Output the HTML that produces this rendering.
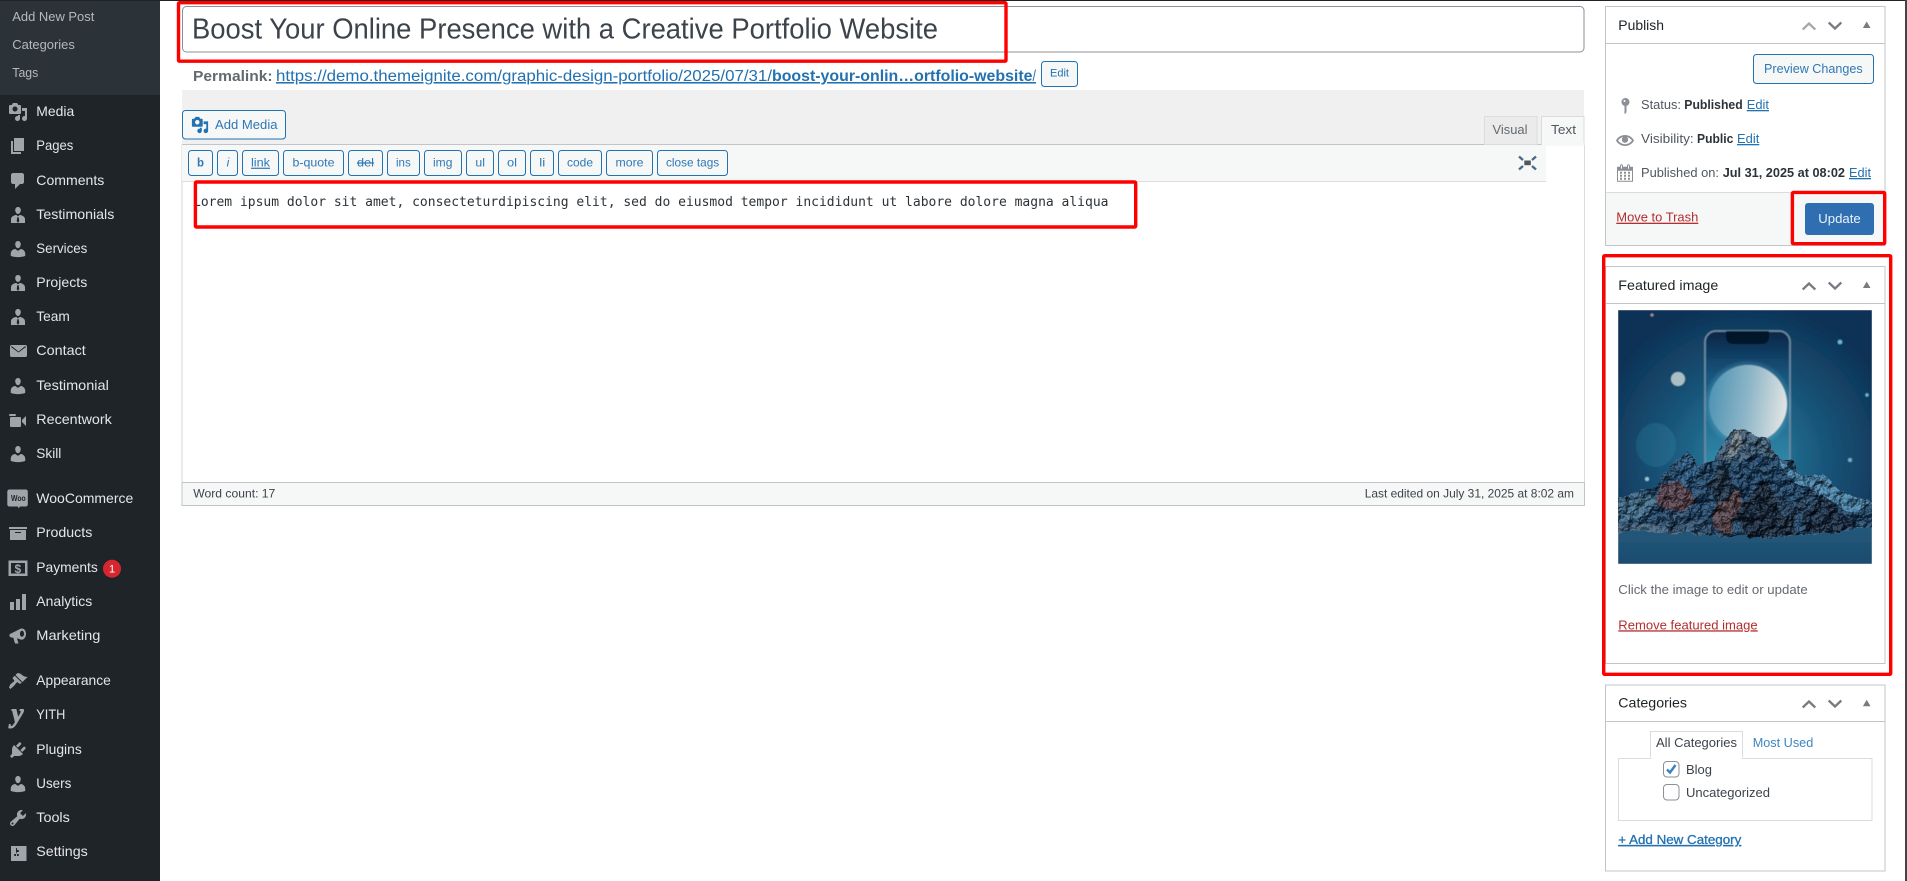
<!DOCTYPE html>
<html lang="en">
<head>
<meta charset="utf-8">
<title>Edit Post</title>
<style>
html,body{margin:0;padding:0;background:#fff;width:1907px;height:881px;overflow:hidden}
svg{display:block}
text{font-family:"Liberation Sans",sans-serif;font-size:13px;white-space:pre}
.m{font-size:14px;fill:#e4e6e7}
.s{font-size:13px;fill:#b4b9bd}
.ic{fill:#a0a5aa}
.l{fill:#2271b1;text-decoration:underline}
.r{fill:#b32d2e;text-decoration:underline}
.d{fill:#50575e}
.b{font-weight:bold;fill:#2c3338}
.h{font-size:14px;fill:#1d2327}
.q{font-size:12px;fill:#2f78b5}
.qb{fill:#f6f7f7;stroke:#2271b1;stroke-width:1}
.chev{fill:none;stroke:#787c82;stroke-width:2.3}
.red{fill:none;stroke:#f00;stroke-width:3.4}
.pan{fill:#fff;stroke:#c3c4c7;stroke-width:1}
</style>
</head>
<body>
<svg width="1907" height="881" viewBox="0 0 1907 881" xmlns="http://www.w3.org/2000/svg">
<defs>
<path id="media" d="M13 11V4c0-.55-.45-1-1-1h-1.67L9 1H5L3.67 3H2c-.55 0-1 .45-1 1v7c0 .55.45 1 1 1h10c.55 0 1-.45 1-1zM7 4.5c1.38 0 2.5 1.12 2.5 2.5S8.38 9.5 7 9.5 4.5 8.38 4.5 7 5.62 4.5 7 4.5zM14 6h5v10.5c0 1.38-1.12 2.5-2.5 2.5S14 17.88 14 16.5s1.12-2.5 2.5-2.5c.17 0 .34.02.5.05V9h-3V6zm-4 8.05V13h2v3.5c0 1.38-1.12 2.5-2.5 2.5S7 17.88 7 16.5 8.12 14 9.5 14c.17 0 .34.02.5.05z"/>
<path id="user" d="M10 9.25c-2.27 0-2.73-3.44-2.73-3.44C7 4.02 7.82 2 9.97 2c2.16 0 2.98 2.02 2.71 3.81 0 0-.41 3.44-2.68 3.44zm0 2.57L12.72 10c2.39 0 4.52 2.33 4.52 4.53v2.49s-3.65 1.13-7.24 1.13c-3.65 0-7.24-1.13-7.24-1.13v-2.49c0-2.25 1.94-4.48 4.47-4.48z"/>
<g id="biz">
<path d="M10 8.900c-2.100 0-2.800-2.900-2.800-3.700C7.200 3.300 8.300 2 10 2s2.800 1.300 2.800 3.200c0 .8-.7 3.700-2.800 3.700z"/>
<path d="M3 18v-3.700c0-2.500 2.500-3.900 5.300-4.400L10 11.400l1.700-1.500c2.800.5 5.300 1.900 5.300 4.400V18z"/>
<path d="M9.300 12.300h1.400l.6 3.700L10 18l-1.300-2z" fill="#1f2429"/>
</g>
<linearGradient id="moon" x1="0" y1="0.4" x2="1" y2="0.55"><stop offset="0" stop-color="#4f94b4"/><stop offset=".5" stop-color="#8fb6c8"/><stop offset="1" stop-color="#e2e6e4"/></linearGradient>
<radialGradient id="sky" cx=".5" cy=".58" r=".72"><stop offset="0" stop-color="#2c86a6"/><stop offset=".45" stop-color="#185478"/><stop offset=".85" stop-color="#0e3256"/></radialGradient>
<linearGradient id="water" x1="0" y1="0" x2="0" y2="1"><stop offset="0" stop-color="#245a7c"/><stop offset="1" stop-color="#1b4c6e"/></linearGradient>
<linearGradient id="screen" x1="0" y1="0" x2="0" y2="1"><stop offset="0" stop-color="#0a2546"/><stop offset=".28" stop-color="#17577f"/><stop offset="1" stop-color="#3a9ab8"/></linearGradient>
<radialGradient id="glow"><stop offset=".62" stop-color="#8fdcee" stop-opacity=".6"/><stop offset="1" stop-color="#8fdcee" stop-opacity="0"/></radialGradient>
<filter id="soft" x="0" y="0" width="1" height="1"><feGaussianBlur stdDeviation=".5"/></filter>
<filter id="rock" x="-5%" y="-5%" width="110%" height="110%" color-interpolation-filters="sRGB">
<feTurbulence type="fractalNoise" baseFrequency=".07" numOctaves="4" seed="7" result="n"/>
<feDisplacementMap in="SourceGraphic" in2="n" scale="10" xChannelSelector="R" yChannelSelector="G" result="d"/>
<feTurbulence type="fractalNoise" baseFrequency=".11" numOctaves="5" seed="3" result="t"/>
<feDiffuseLighting in="t" surfaceScale="3.500" diffuseConstant="1.100" lighting-color="#fff" result="lit"><feDistantLight azimuth="235" elevation="55"/></feDiffuseLighting>
<feComposite in="lit" in2="d" operator="in" result="litc"/>
<feBlend in="d" in2="litc" mode="multiply" result="shaded"/>
<feSpecularLighting in="t" surfaceScale="3" specularConstant=".3" specularExponent="14" lighting-color="#bcd4e6" result="sp"><feDistantLight azimuth="235" elevation="50"/></feSpecularLighting>
<feComposite in="sp" in2="d" operator="in" result="spc"/>
<feMerge result="mx"><feMergeNode in="shaded"/><feMergeNode in="spc"/></feMerge>
<feGaussianBlur in="mx" stdDeviation=".35"/>
</filter>
<clipPath id="imgclip"><rect width="254" height="254"/></clipPath>
</defs>

<!-- page edges -->
<rect x="0" y="0" width="1907" height="1" fill="#1d2327"/>
<rect x="1905" y="0" width="2" height="881" fill="#444"/>

<!-- admin sidebar -->
<g>
<rect x="0" y="0" width="160" height="881" fill="#1f2429"/>
<rect x="0" y="1" width="160" height="94" fill="#2c3338"/>
<text class="s" x="12.300" y="21" textLength="82" lengthAdjust="spacingAndGlyphs">Add New Post</text>
<text class="s" x="12.300" y="49" textLength="62.500" lengthAdjust="spacingAndGlyphs">Categories</text>
<text class="s" x="12.300" y="77" textLength="26" lengthAdjust="spacingAndGlyphs">Tags</text>

<text class="m" x="36.300" y="116" textLength="38" lengthAdjust="spacingAndGlyphs">Media</text>
<text class="m" x="36.300" y="150" textLength="37" lengthAdjust="spacingAndGlyphs">Pages</text>
<text class="m" x="36.300" y="185" textLength="68" lengthAdjust="spacingAndGlyphs">Comments</text>
<text class="m" x="36.300" y="219" textLength="78" lengthAdjust="spacingAndGlyphs">Testimonials</text>
<text class="m" x="36.300" y="253" textLength="51" lengthAdjust="spacingAndGlyphs">Services</text>
<text class="m" x="36.300" y="287" textLength="51" lengthAdjust="spacingAndGlyphs">Projects</text>
<text class="m" x="36.300" y="321" textLength="33.500" lengthAdjust="spacingAndGlyphs">Team</text>
<text class="m" x="36.300" y="355" textLength="49.500" lengthAdjust="spacingAndGlyphs">Contact</text>
<text class="m" x="36.300" y="390" textLength="72.500" lengthAdjust="spacingAndGlyphs">Testimonial</text>
<text class="m" x="36.300" y="424" textLength="75.500" lengthAdjust="spacingAndGlyphs">Recentwork</text>
<text class="m" x="36.300" y="458" textLength="25" lengthAdjust="spacingAndGlyphs">Skill</text>
<text class="m" x="36.300" y="503" textLength="97" lengthAdjust="spacingAndGlyphs">WooCommerce</text>
<text class="m" x="36.300" y="537" textLength="56" lengthAdjust="spacingAndGlyphs">Products</text>
<text class="m" x="36.300" y="572" textLength="61.500" lengthAdjust="spacingAndGlyphs">Payments</text>
<text class="m" x="36.300" y="606" textLength="56" lengthAdjust="spacingAndGlyphs">Analytics</text>
<text class="m" x="36.300" y="640" textLength="64" lengthAdjust="spacingAndGlyphs">Marketing</text>
<text class="m" x="36.300" y="685" textLength="74.500" lengthAdjust="spacingAndGlyphs">Appearance</text>
<text class="m" x="36.300" y="719" textLength="29" lengthAdjust="spacingAndGlyphs">YITH</text>
<text class="m" x="36.300" y="754" textLength="45.500" lengthAdjust="spacingAndGlyphs">Plugins</text>
<text class="m" x="36.300" y="788" textLength="35" lengthAdjust="spacingAndGlyphs">Users</text>
<text class="m" x="36.300" y="822" textLength="33.500" lengthAdjust="spacingAndGlyphs">Tools</text>
<text class="m" x="36.300" y="856" textLength="51.500" lengthAdjust="spacingAndGlyphs">Settings</text>

<g class="ic">
<use href="#media" transform="translate(8,102)"/>
<path transform="translate(8,136)" d="M6 15V2h10v13H6zm-1 1h8v2H3V5h2v11z"/>
<path transform="translate(8,171)" d="M5 2h9c1.100 0 2 .9 2 2v7c0 1.100-.9 2-2 2h-2l-5 5v-5H5c-1.100 0-2-.9-2-2V4c0-1.100.9-2 2-2z"/>
<use href="#biz" transform="translate(8,205)"/>
<use href="#user" transform="translate(8,239)"/>
<use href="#biz" transform="translate(8,273)"/>
<use href="#biz" transform="translate(8,307)"/>
<path transform="translate(8,341)" d="M19 14.500v-9c0-.83-.67-1.500-1.500-1.500H3.490c-.83 0-1.500.67-1.500 1.500v9c0 .83.67 1.500 1.500 1.500H17.500c.83 0 1.500-.67 1.500-1.500zm-1.310-9.110c.33.33.15.67-.03.84L10.500 11.500 3.300 6.230c-.18-.17-.36-.51-.03-.84s.67-.17.95.07l6.280 5.040 6.250-5.040c.28-.24.62-.4.95-.07z"/>
<use href="#user" transform="translate(8,376)"/>
<path transform="translate(8,410)" d="M8 5c0-.55-.45-1-1-1H2c-.55 0-1 .45-1 1 0 .55.45 1 1 1h5c.55 0 1-.45 1-1zm6 5l4-4v10l-4-4v-2zm-1 4V8c0-.55-.45-1-1-1H3c-.55 0-1 .45-1 1v8c0 .55.45 1 1 1h9c.55 0 1-.45 1-1z"/>
<use href="#user" transform="translate(8,444)"/>
<path d="M10.300 489.500h15.500c1.100 0 2 .9 2 2v13c0 1.100-.9 2-2 2h-6l-1 2-1-2h-8.500c-1.100 0-2-.9-2-2v-13c0-1.100.9-2 2-2z"/>
<path transform="translate(8,523)" d="M19 4v2H1V4h18zM2 7h16v10H2V7zm11 3V9H7v1h6z"/>
<path fill-rule="evenodd" d="M8.500 560.500h19v15.500h-19zM11 563v10.500h14V563z"/>
<path transform="translate(8,592)" d="M18 18V2h-4v16h4zm-6 0V7H8v11h4zm-6 0v-8H2v8h4z"/>
<path fill-rule="evenodd" transform="translate(8,626)" d="M2 8l10-5c3-1.500 6 1 6 4.700S15.500 14.500 12.500 13.500L9 12.300l1.500 5.200H7L5.300 11.700 3.500 11.500C1.500 11.300 .8 8.800 2 8zM14 4.800c-1.200 0-2 1.300-2 3s.8 3 2 3 2-1.300 2-3-.8-3-2-3z"/>
<path transform="translate(8,671)" d="M14.480 11.060L7.410 3.990l1.500-1.500c.5-.56 2.300-.47 3.510.32 1.210.8 1.430 1.280 2.910 2.100 1.180.64 2.450 1.260 4.450.85zm-.71.71L6.700 4.700 4.930 6.470c-.39.39-.39 1.020 0 1.410l1.060 1.060c.39.39.39 1.030 0 1.420-.6.6-3 2.400-3.700 3.100L1 16.500l1.500 1.500 3.700-3.400c.7-.7 1.900-2.500 2.500-3.100.39-.39 1.030-.39 1.420 0l1.060 1.060c.39.39 1.020.39 1.410 0z"/>
<text x="11.500" y="722" style="font-family:'Liberation Serif',serif;font-size:27px;font-weight:bold;font-style:italic;fill:#a0a5aa;stroke:#a0a5aa;stroke-width:1">y</text>
<path transform="translate(8,740)" d="M13.110 4.360L9.870 7.600 8 5.730l3.240-3.240c.35-.34 1.050-.2 1.560.32.52.51.66 1.210.31 1.550zm-8 1.770l.91-1.120 9.010 9.010-1.190.84c-.71.71-2.630 1.160-3.820 1.160H6.140L4.900 17.260c-.59.59-1.540.59-2.120 0-.59-.58-.59-1.530 0-2.120l1.240-1.240v-3.880c0-1.130.4-3.190 1.090-3.890zm7.260 3.970l3.240-3.240c.34-.35 1.040-.21 1.550.31.52.51.66 1.210.31 1.550l-3.240 3.250z"/>
<use href="#user" transform="translate(8,774)"/>
<path transform="translate(8,808)" d="M16.680 9.770c-1.340 1.340-3.300 1.670-4.950.99l-5.410 6.520c-.99.99-2.590.99-3.580 0s-.99-2.590 0-3.570l6.520-5.420c-.68-1.650-.35-3.610.99-4.950 1.280-1.280 3.120-1.620 4.720-1.060l-2.890 2.890 2.820 2.820 2.860-2.870c.53 1.580.18 3.390-1.080 4.650zM3.810 16.210c.4.39 1.040.39 1.430 0 .4-.4.4-1.040 0-1.430-.39-.4-1.030-.4-1.430 0-.39.39-.39 1.030 0 1.430z"/>
<path transform="translate(9,843)" d="M2 3h15.500v15H2zM8 11h1c.55 0 1 .45 1 1s-.45 1-1 1H8v1.500c0 .28-.22.5-.5.5s-.5-.22-.5-.5V13H6c-.55 0-1-.45-1-1s.45-1 1-1h1V5.500c0-.28.22-.5.5-.5s.5.22.5.5V7h1c.55 0 1 .45 1 1s-.45 1-1 1h-1v5.500c0 .28-.22.5-.5.5s-.5-.22-.5-.5V9z" fill-rule="evenodd"/>
</g>
<text x="11" y="501" textLength="14.700" lengthAdjust="spacingAndGlyphs" style="font-size:8.500px;font-weight:bold;fill:#1f2429">Woo</text>
<text x="14.500" y="573" style="font-size:12px;font-weight:bold;fill:#a0a5aa">$</text>
<circle cx="112" cy="568.700" r="9" fill="#d8262f"/>
<text x="112" y="572.700" text-anchor="middle" style="font-size:11px;fill:#fff">1</text>
</g>

<!-- title -->
<rect x="182.500" y="6.500" width="1401.500" height="45.500" rx="4" fill="#fff" stroke="#8c8f94"/>
<text x="192" y="38.300" textLength="746" lengthAdjust="spacingAndGlyphs" style="font-size:28.500px;fill:#3c434a">Boost Your Online Presence with a Creative Portfolio Website</text>

<!-- permalink -->
<text x="193" y="81" textLength="79.600" lengthAdjust="spacingAndGlyphs" style="font-size:15px;font-weight:bold;fill:#646970">Permalink:</text>
<text class="l" x="276" y="81" textLength="496" lengthAdjust="spacingAndGlyphs" style="font-size:15.500px">https://demo.themeignite.com/graphic-design-portfolio/2025/07/31/</text>
<text class="l" x="772" y="81" textLength="260.500" lengthAdjust="spacingAndGlyphs" style="font-size:15.500px;font-weight:bold">boost-your-onlin…ortfolio-website</text>
<text class="l" x="1032.500" y="81" textLength="3.500" lengthAdjust="spacingAndGlyphs" style="font-size:15.500px">/</text>
<rect class="qb" x="1041.500" y="61.500" width="36" height="25" rx="3"/>
<text x="1050" y="76.700" textLength="19" lengthAdjust="spacingAndGlyphs" style="font-size:11px;fill:#2271b1">Edit</text>

<!-- editor toolbar -->
<rect x="182" y="90" width="1402" height="54" fill="#f0f0f1"/>
<rect x="182" y="144" width="1402" height="1" fill="#c3c4c7"/>
<rect class="qb" x="182.500" y="110.500" width="103" height="28.500" rx="3"/>
<use href="#media" transform="translate(191,116) scale(.9)" fill="#2271b1"/>
<text x="215" y="129" textLength="62.500" lengthAdjust="spacingAndGlyphs" style="fill:#2f78b5">Add Media</text>

<rect x="1484.500" y="116.500" width="52.500" height="28" fill="#ebebeb" stroke="#dcdcde"/>
<text x="1492.500" y="134" textLength="35" lengthAdjust="spacingAndGlyphs" style="fill:#646970">Visual</text>
<rect x="1541.500" y="116.500" width="42.500" height="28.500" fill="#f6f7f7" stroke="#dcdcde"/>
<rect x="1542" y="143" width="42" height="3" fill="#f6f7f7"/>
<text x="1551" y="134" textLength="25" lengthAdjust="spacingAndGlyphs" style="fill:#50575e">Text</text>

<!-- editor body -->
<rect x="181.500" y="145" width="1" height="338" fill="#d4d5d7"/>
<rect x="1584" y="145" width="1" height="338" fill="#dcdcde"/>
<rect x="182" y="145" width="1364" height="36" fill="#f6f7f7"/>
<rect x="182" y="181" width="1364" height="1" fill="#dcdcde"/>

<rect class="qb" x="188.500" y="150.500" width="24" height="25" rx="3"/>
<rect class="qb" x="217.500" y="150.500" width="20" height="25" rx="3"/>
<rect class="qb" x="242.500" y="150.500" width="36" height="25" rx="3"/>
<rect class="qb" x="283.500" y="150.500" width="60" height="25" rx="3"/>
<rect class="qb" x="348.500" y="150.500" width="34" height="25" rx="3"/>
<rect class="qb" x="387.500" y="150.500" width="32" height="25" rx="3"/>
<rect class="qb" x="424.500" y="150.500" width="37" height="25" rx="3"/>
<rect class="qb" x="466.500" y="150.500" width="27" height="25" rx="3"/>
<rect class="qb" x="498.500" y="150.500" width="27" height="25" rx="3"/>
<rect class="qb" x="530.500" y="150.500" width="23" height="25" rx="3"/>
<rect class="qb" x="558.500" y="150.500" width="43" height="25" rx="3"/>
<rect class="qb" x="606.500" y="150.500" width="46" height="25" rx="3"/>
<rect class="qb" x="657.500" y="150.500" width="70" height="25" rx="3"/>
<text class="q" x="197" y="166.700" textLength="7" lengthAdjust="spacingAndGlyphs" style="font-weight:bold">b</text>
<text class="q" x="226.600" y="166.700" style="font-style:italic">i</text>
<text class="q" x="251" y="166.700" textLength="19" lengthAdjust="spacingAndGlyphs" style="text-decoration:underline">link</text>
<text class="q" x="292.500" y="166.700" textLength="42" lengthAdjust="spacingAndGlyphs">b-quote</text>
<text class="q" x="357" y="166.700" textLength="17" lengthAdjust="spacingAndGlyphs" style="text-decoration:line-through">del</text>
<text class="q" x="396" y="166.700" textLength="14.700" lengthAdjust="spacingAndGlyphs">ins</text>
<text class="q" x="433" y="166.700" textLength="19.400" lengthAdjust="spacingAndGlyphs">img</text>
<text class="q" x="475.400" y="166.700" textLength="9.600" lengthAdjust="spacingAndGlyphs">ul</text>
<text class="q" x="507" y="166.700" textLength="10" lengthAdjust="spacingAndGlyphs">ol</text>
<text class="q" x="539.300" y="166.700" textLength="6" lengthAdjust="spacingAndGlyphs">li</text>
<text class="q" x="567" y="166.700" textLength="26" lengthAdjust="spacingAndGlyphs">code</text>
<text class="q" x="615.500" y="166.700" textLength="28" lengthAdjust="spacingAndGlyphs">more</text>
<text class="q" x="666" y="166.700" textLength="53.200" lengthAdjust="spacingAndGlyphs">close tags</text>

<!-- fullscreen icon -->
<g fill="#50575e">
<rect x="1524.300" y="160.500" width="6.500" height="4.700"/>
</g>
<g fill="none" stroke="#4a6a8c" stroke-width="2.400">
<path d="M1519 156.500l4 3.500"/>
<path d="M1536 156.500l-4 3.500"/>
<path d="M1519 169.500l4-3.500"/>
<path d="M1536 169.500l-4-3.500"/>
</g>

<text x="193" y="206" textLength="915.500" lengthAdjust="spacingAndGlyphs" style="font-family:'DejaVu Sans Mono','Liberation Mono',monospace;fill:#2c3338">Lorem ipsum dolor sit amet, consecteturdipiscing elit, sed do eiusmod tempor incididunt ut labore dolore magna aliqua</text>

<!-- status bar -->
<rect x="182" y="482.500" width="1402.500" height="23" fill="#f6f7f7" stroke="#c3c4c7"/>
<text x="193.300" y="497.700" textLength="82" lengthAdjust="spacingAndGlyphs" style="font-size:12px;fill:#3c434a">Word count: 17</text>
<text x="1364.700" y="497.700" textLength="209.300" lengthAdjust="spacingAndGlyphs" style="font-size:12px;fill:#3c434a">Last edited on July 31, 2025 at 8:02 am</text>

<!-- publish box -->
<rect class="pan" x="1605.500" y="6.500" width="279.500" height="239"/>
<rect x="1606" y="43" width="279" height="1" fill="#c3c4c7"/>
<text class="h" x="1618.300" y="30" textLength="45.700" lengthAdjust="spacingAndGlyphs">Publish</text>
<path class="chev" style="stroke:#a7aaad" d="M1802.700 29.500l6.300-6 6.300 6"/>
<path class="chev" d="M1828.700 22.500l6.300 6 6.300-6"/>
<path d="M1866.700 21.500l3.800 6.500h-7.600z" fill="#787c82"/>

<rect class="qb" x="1753.500" y="54.500" width="120" height="29" rx="3"/>
<text x="1764" y="73" textLength="98.700" lengthAdjust="spacingAndGlyphs" style="fill:#2f78b5">Preview Changes</text>

<path transform="translate(1615.500,96)" d="M14 6c0 1.860-1.280 3.410-3 3.860V16c0 1-2 2-2 2V9.860c-1.720-.45-3-2-3-3.860 0-2.210 1.790-4 4-4s4 1.790 4 4zM8 5c0 .55.45 1 1 1s1-.45 1-1-.45-1-1-1-1 .45-1 1z" fill="#8c8f94"/>
<text class="d" x="1641" y="109" textLength="40" lengthAdjust="spacingAndGlyphs">Status:</text>
<text class="b" x="1684.300" y="109" textLength="58.400" lengthAdjust="spacingAndGlyphs">Published</text>
<text class="l" x="1746.700" y="109" textLength="22.300" lengthAdjust="spacingAndGlyphs">Edit</text>

<path transform="translate(1616,131.500) scale(.9)" d="M19.700 9.400C17.700 6 14 3.900 10 3.900S2.300 6 .3 9.400L0 10l.3.6c2 3.400 5.700 5.500 9.700 5.500s7.700-2.100 9.700-5.500l.3-.6-.3-.6zM10 14.100c-3.100 0-6-1.600-7.700-4.100C3.600 8 5.700 6.600 8 6.100c-.9.6-1.500 1.700-1.500 2.900 0 1.900 1.600 3.500 3.500 3.500s3.500-1.600 3.500-3.500c0-1.200-.6-2.300-1.500-2.900 2.300.5 4.400 1.900 5.700 3.900-1.700 2.500-4.600 4.100-7.700 4.100z" fill="#8c8f94"/>
<text class="d" x="1641" y="143" textLength="52.700" lengthAdjust="spacingAndGlyphs">Visibility:</text>
<text class="b" x="1697" y="143" textLength="36.300" lengthAdjust="spacingAndGlyphs">Public</text>
<text class="l" x="1737" y="143" textLength="22.300" lengthAdjust="spacingAndGlyphs">Edit</text>

<path transform="translate(1615,162.800)" d="M15 4h3v15H2V4h3V3c0-.41.15-.76.44-1.060.29-.29.65-.44 1.060-.44s.77.15 1.060.44c.29.3.44.65.44 1.060v1h4V3c0-.41.15-.76.44-1.060.29-.29.65-.44 1.060-.44s.77.15 1.060.44c.29.3.44.65.44 1.060v1zM6 3v2.500c0 .14.05.26.15.36.09.09.21.14.35.14s.26-.05.35-.14c.1-.1.15-.22.15-.36V3c0-.14-.05-.26-.15-.35-.09-.1-.21-.15-.35-.15s-.26.05-.35.15c-.1.09-.15.21-.15.35zm7 0v2.500c0 .14.05.26.14.36.1.09.22.14.36.14s.26-.05.36-.14c.09-.1.14-.22.14-.36V3c0-.14-.05-.26-.14-.35-.1-.1-.22-.15-.36-.15s-.26.05-.36.15c-.09.09-.14.21-.14.35zm4 15V8H3v10h14zM7 9v2H5V9h2zm2 0h2v2H9V9zm4 2V9h2v2h-2zm-6 1v2H5v-2h2zm2 0h2v2H9v-2zm4 2v-2h2v2h-2zm-6 1v2H5v-2h2zm4 2H9v-2h2v2zm4 0h-2v-2h2v2z" fill="#8c8f94"/>
<text class="d" x="1641" y="177" textLength="78" lengthAdjust="spacingAndGlyphs">Published on:</text>
<text class="b" x="1722.700" y="177" textLength="122.300" lengthAdjust="spacingAndGlyphs">Jul 31, 2025 at 08:02</text>
<text class="l" x="1849" y="177" textLength="22" lengthAdjust="spacingAndGlyphs">Edit</text>

<rect x="1606" y="192" width="279" height="53" fill="#f6f7f7"/>
<rect x="1606" y="192" width="279" height="1" fill="#dcdcde"/>
<text class="r" x="1616.300" y="221.700" textLength="82" lengthAdjust="spacingAndGlyphs">Move to Trash</text>
<rect x="1805" y="203" width="69" height="32" rx="3" fill="#2f6fb1"/>
<text x="1818.300" y="223" textLength="42.400" lengthAdjust="spacingAndGlyphs" style="fill:#eaf2f9">Update</text>

<!-- featured image box -->
<rect class="pan" x="1605.500" y="266.500" width="279.500" height="397"/>
<rect x="1606" y="303" width="279" height="1" fill="#c3c4c7"/>
<text class="h" x="1618.300" y="290" textLength="100" lengthAdjust="spacingAndGlyphs">Featured image</text>
<path class="chev" d="M1802.700 289.500l6.300-6 6.300 6"/>
<path class="chev" d="M1828.700 282.500l6.300 6 6.300-6"/>
<path d="M1866.700 281.500l3.800 6.500h-7.600z" fill="#787c82"/>

<g transform="translate(1618,310)" clip-path="url(#imgclip)">
<g filter="url(#soft)">
<rect width="254" height="254" fill="url(#sky)"/>
<rect y="214" width="254" height="40" fill="url(#water)"/>
<circle cx="60" cy="69" r="7" fill="#a9bfc4"/>
<circle cx="222" cy="32" r="2.300" fill="#66b7cf"/>
<circle cx="249" cy="85" r="1.700" fill="#66b7cf"/>
<circle cx="34" cy="5" r="1.500" fill="#a88ea6"/>
<circle cx="232" cy="150" r="2" fill="#6fb0c6"/>
<circle cx="29" cy="169" r="2" fill="#9cc4d2"/>
<ellipse cx="38" cy="135" rx="20" ry="22" fill="#3d8fae" opacity=".25"/>
<rect x="87" y="21" width="85" height="165" rx="11" fill="url(#screen)" stroke="#6b8aa0" stroke-width="1.800"/>
<circle cx="130" cy="94" r="45" fill="url(#glow)"/>
<circle cx="130" cy="94" r="39" fill="url(#moon)"/>
<path d="M108 21h43v6c0 4-3 7-7 7h-29c-4 0-7-3-7-7z" fill="#06162c"/>
</g>
<g filter="url(#rock)">
<polygon points="-8,192 20,181 35,178 45,165 55,155 70,142 82,155 95,150 104,135 115,120 125,122 135,124 150,130 160,150 175,150 185,165 205,165 230,185 262,195 262,216 200,224 140,228 80,224 30,214 -8,212" fill="#183c5e"/>
<polygon points="104,135 115,120 125,122 135,124 150,130 160,150 140,142 125,150 112,155 98,150" fill="#38566e"/>
<polygon points="115,122 125,122 122,140 108,150" fill="#707e86"/>
<polygon points="45,175 70,142 82,160 75,180 55,190" fill="#24527a"/>
<polygon points="160,150 185,165 205,165 230,185 262,195 230,202 200,185 175,172" fill="#4682a8"/>
<polygon points="-8,192 20,181 40,190 30,205 -8,212" fill="#3a6482"/>
<polygon points="40,178 62,170 78,190 60,205 38,192" fill="#523a44"/>
<polygon points="90,175 103,153 115,172 125,180 112,198 96,192" fill="#132538"/>
<polygon points="98,195 120,180 125,200 110,222 92,218" fill="#5c3c3c" opacity=".85"/>
<polygon points="118,205 145,170 165,185 180,200 175,224 130,228" fill="#0e1c2e"/>
<polygon points="185,205 205,183 225,205 240,215 205,224 185,222" fill="#102238"/>
<polygon points="150,172 175,195 200,178 185,205 165,210" fill="#1e3854"/>
<polygon points="30,214 60,200 85,210 110,225 70,222" fill="#234260"/>
<polygon points="-8,212 30,214 80,224 -8,222" fill="#173858" opacity=".7"/>
</g>
</g>

<text x="1618.300" y="594" textLength="189.400" lengthAdjust="spacingAndGlyphs" style="fill:#646970">Click the image to edit or update</text>
<text class="r" x="1618.300" y="629.300" textLength="139.400" lengthAdjust="spacingAndGlyphs">Remove featured image</text>

<!-- categories box -->
<rect class="pan" x="1605.500" y="685" width="279.500" height="186"/>
<rect x="1606" y="721" width="279" height="1" fill="#c3c4c7"/>
<text class="h" x="1618.300" y="707.700" textLength="68.700" lengthAdjust="spacingAndGlyphs">Categories</text>
<path class="chev" d="M1802.700 707.500l6.300-6 6.300 6"/>
<path class="chev" d="M1828.700 700.500l6.300 6 6.300-6"/>
<path d="M1866.700 699.800l3.800 6.500h-7.600z" fill="#787c82"/>

<rect x="1618.500" y="758.500" width="253.500" height="62" fill="#fff" stroke="#dcdcde"/>
<path d="M1650.500 757.500v-26h92v26" fill="#fff" stroke="#dcdcde"/>
<rect x="1651" y="755" width="91" height="4" fill="#fff"/>
<text x="1656" y="747" textLength="81" lengthAdjust="spacingAndGlyphs" style="fill:#3c434a">All Categories</text>
<text x="1752.700" y="747" textLength="60.600" lengthAdjust="spacingAndGlyphs" style="fill:#3b87c4">Most Used</text>
<rect x="1663.500" y="761.500" width="15.500" height="15.500" rx="3.500" fill="#fff" stroke="#8c8f94"/>
<path d="M1667 769.500l3 3 5.500-7.500" fill="none" stroke="#3582c4" stroke-width="2.400"/>
<text x="1686" y="774" textLength="26" lengthAdjust="spacingAndGlyphs" style="fill:#3c434a">Blog</text>
<rect x="1663.500" y="784.500" width="15.500" height="15.500" rx="3.500" fill="#fff" stroke="#8c8f94"/>
<text x="1686" y="797" textLength="84" lengthAdjust="spacingAndGlyphs" style="fill:#3c434a">Uncategorized</text>
<text class="l" x="1618.300" y="844" textLength="123" lengthAdjust="spacingAndGlyphs" style="stroke:#2271b1;stroke-width:.3">+ Add New Category</text>

<!-- red annotation boxes -->
<rect class="red" x="178.500" y="2.700" width="827.500" height="58.500" rx="1"/>
<rect class="red" x="195.400" y="182" width="940.300" height="45" rx="1"/>
<rect class="red" x="1792.400" y="192.400" width="92.300" height="51.300" rx="1"/>
<rect class="red" x="1603.700" y="255.700" width="287" height="418.600" rx="1"/>
</svg>
</body>
</html>
